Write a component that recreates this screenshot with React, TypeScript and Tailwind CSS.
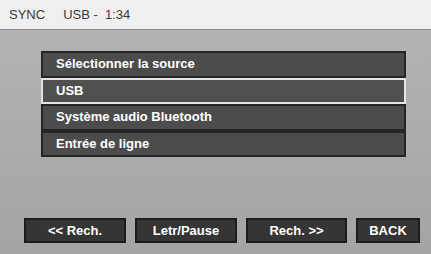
import React from "react";

const items = [
  "Sélectionner la source",
  "USB",
  "Système audio Bluetooth",
  "Entrée de ligne",
];

const buttons = [
  { label: "<< Rech.", w: "w-[102px]" },
  { label: "Letr/Pause", w: "w-[102px]" },
  { label: "Rech. >>", w: "w-[101px]" },
  { label: "BACK", w: "w-[64px]" },
];

export default function App() {
  return (
    <div className="flex h-[254px] w-[431px] flex-col overflow-hidden bg-[#aaaaaa] font-['Liberation_Sans',Arial,sans-serif]">
      {/* status bar */}
      <div className="flex h-[30px] items-center gap-[18px] border-b border-[#8c8c8c] bg-[#efefef] pl-[9px] text-[13px] text-[#3a3a3a]">
        <span>SYNC</span>
        <span>USB - &nbsp;1:34</span>
      </div>

      <div className="flex flex-1 flex-col bg-gradient-to-b from-[#b3b3b3] to-[#a4a4a4] pl-[41px] pt-[21px]">
        <div className="flex w-[365px] flex-col">
          {items.map((label, i) => (
            <div
              key={label}
              className={
                i === 1
                  ? "flex h-[26.5px] items-center border-2 border-[#e4e4e4] bg-[#505050] pl-[13px] pb-[1px] text-[13px] font-bold text-white"
                  : "flex h-[26.5px] items-center border-2 border-[#262626] bg-[#4c4c4c] pl-[13px] pb-[1px] text-[13px] font-bold text-white"
              }
            >
              {label}
            </div>
          ))}
        </div>

        <div className="-ml-[17px] mt-[61px] flex gap-[9px]">
          {buttons.map((b) => (
            <div
              key={b.label}
              className={`flex h-[25px] ${b.w} items-center justify-center border-2 border-[#1c1c1c] bg-[#353535] text-[13px] font-bold text-white`}
            >
              {b.label}
            </div>
          ))}
        </div>
      </div>
    </div>
  );
}
